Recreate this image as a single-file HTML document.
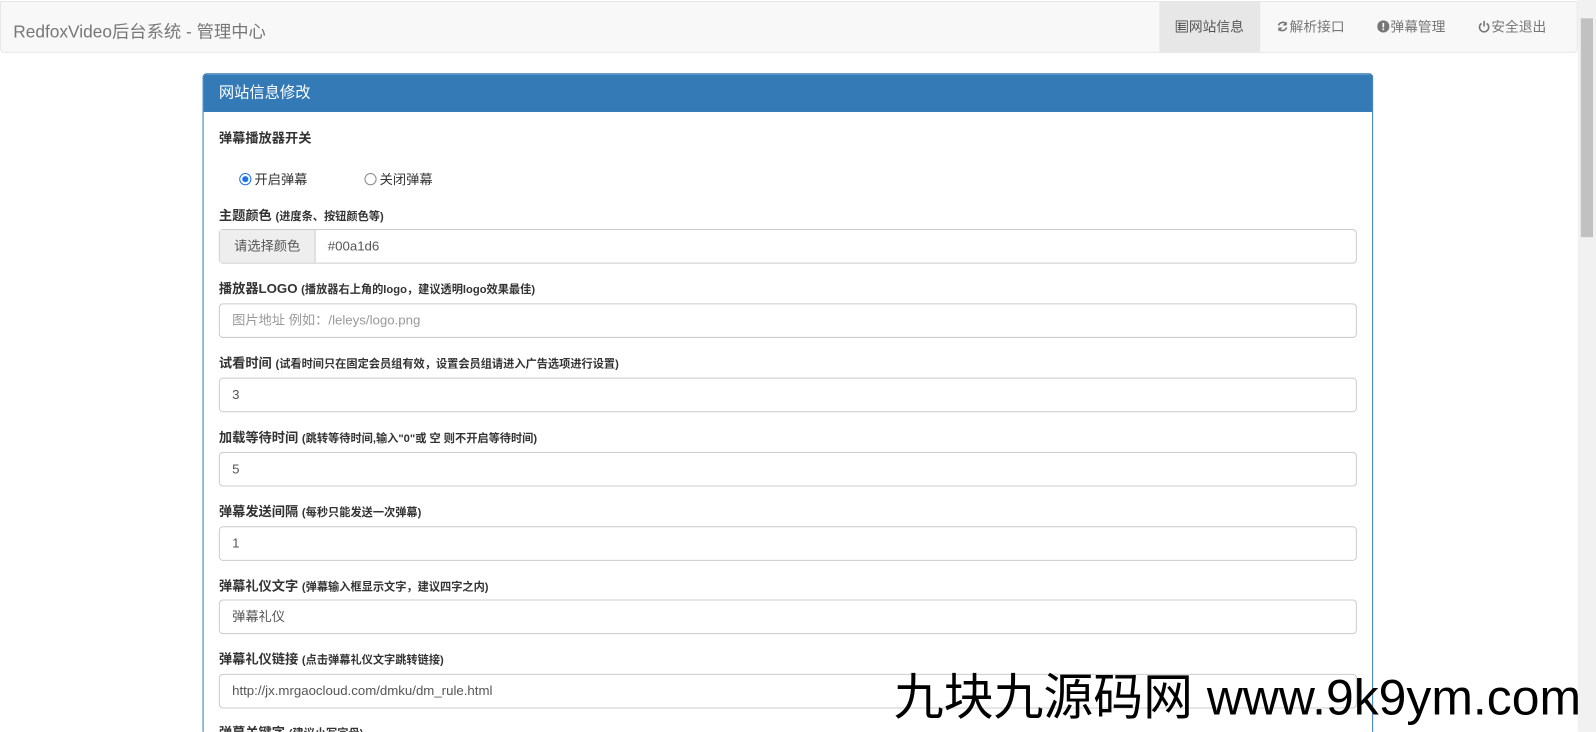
<!DOCTYPE html>
<html><head><meta charset="utf-8"><style>
*{box-sizing:border-box}
html,body{margin:0;width:1596px;height:732px;overflow:hidden;background:#fff}
body{font-family:"Liberation Sans","Noto Sans CJK SC",sans-serif;color:#333;position:relative}
#w{position:absolute;left:0;top:0;width:1568px;height:719px;overflow:hidden;transform:scale(1.0179);transform-origin:0 0}
.nav{position:absolute;left:0;top:1px;width:1550px;height:51px;background:#f8f8f8;border:1px solid #e7e7e7;border-radius:0 0 4px 4px}
.brand{position:absolute;left:12px;top:15px;font-size:17px;color:#777}
.links{position:absolute;right:0;top:0;height:49px;display:flex}
.links a{display:block;padding:0 16px;line-height:49px;font-size:13.5px;color:#777;text-decoration:none}
.links a.act{background:#e7e7e7;color:#555}
.links svg{vertical-align:-1px;margin-right:1px}
.sb{position:absolute;left:1550px;top:0;width:18px;height:719px;background:#f1f1f1}
.sb div{position:absolute;left:3px;top:18px;width:12px;height:215px;background:#c1c1c1}
.panel{position:absolute;left:199px;top:72px;width:1150px;height:700px;border:1px solid #337ab7;border-radius:4px;overflow:hidden}
.ph{background:#337ab7;color:#fff;height:37px;padding:0 15px;line-height:37px;font-size:15px}
.lbl{position:absolute;left:15px;font-size:13px;font-weight:bold;color:#333}
.lbl small{font-size:11px;font-weight:bold}
.inp{position:absolute;left:15px;width:1118px;height:34px;border:1px solid #ccc;border-radius:4px;font-size:13px;color:#555;line-height:32px;padding-left:12px}
.rad{position:absolute;top:93px;font-size:13px;color:#333}
.rad i{display:inline-block;width:12px;height:12px;border:1px solid #888;border-radius:50%;vertical-align:-1px;margin-right:3px;position:relative}
.wm{position:absolute;left:878px;top:646px;font-size:49px;color:#000;white-space:nowrap}
</style></head><body><div id="w">
<div class="nav"><div class="brand">RedfoxVideo后台系统 - 管理中心</div>
<div class="links">
<a class="act"><svg width="12" height="12" viewBox="0 0 12 12"><rect x="0.5" y="0.5" width="11" height="11" fill="none" stroke="#555"/><path d="M2 3h8M2 5h8M2 7h8M2 9h8M4 2v8" stroke="#555"/></svg>网站信息</a>
<a><svg width="12" height="12" viewBox="0 0 12 12"><path d="M10 4A4.5 4.5 0 0 0 2 5M2 8a4.5 4.5 0 0 0 8-1" fill="none" stroke="#777" stroke-width="1.6"/><path d="M10 1v4H6M2 11V7h4" fill="#777"/></svg>解析接口</a>
<a><svg width="12" height="12" viewBox="0 0 12 12"><circle cx="6" cy="6" r="6" fill="#777"/><rect x="5.2" y="2.5" width="1.6" height="4.5" fill="#fff"/><rect x="5.2" y="8" width="1.6" height="1.6" fill="#fff"/></svg>弹幕管理</a>
<a><svg width="12" height="12" viewBox="0 0 12 12"><path d="M3.5 3A4.5 4.5 0 1 0 8.5 3" fill="none" stroke="#777" stroke-width="1.6"/><path d="M6 0.5v5.5" stroke="#777" stroke-width="1.6"/></svg>安全退出</a>
<span style="width:14px"></span></div></div>
<div class="panel"><div class="ph">网站信息修改</div>
<div class="lbl" style="top:52px">弹幕播放器开关</div>
<div class="rad" style="left:35px"><i style="border-color:#1a73e8"><b style="position:absolute;left:2px;top:2px;width:6px;height:6px;border-radius:50%;background:#1a73e8"></b></i>开启弹幕</div>
<div class="rad" style="left:158px"><i></i>关闭弹幕</div>
<div class="lbl" style="top:128px">主题颜色 <small>(进度条、按钮颜色等)</small></div>
<div class="inp" style="top:152px;padding:0"><span style="display:inline-block;width:94px;height:32px;background:#eee;border-right:1px solid #ccc;text-align:center">请选择颜色</span><span style="padding-left:12px">#00a1d6</span></div>
<div class="lbl" style="top:200px">播放器LOGO <small>(播放器右上角的logo，建议透明logo效果最佳)</small></div>
<div class="inp" style="top:225px;color:#999">图片地址 例如：/leleys/logo.png</div>
<div class="lbl" style="top:273px">试看时间 <small>(试看时间只在固定会员组有效，设置会员组请进入广告选项进行设置)</small></div>
<div class="inp" style="top:298px">3</div>
<div class="lbl" style="top:346px">加载等待时间 <small>(跳转等待时间,输入"0"或 空 则不开启等待时间)</small></div>
<div class="inp" style="top:371px">5</div>
<div class="lbl" style="top:419px">弹幕发送间隔 <small>(每秒只能发送一次弹幕)</small></div>
<div class="inp" style="top:444px">1</div>
<div class="lbl" style="top:492px">弹幕礼仪文字 <small>(弹幕输入框显示文字，建议四字之内)</small></div>
<div class="inp" style="top:516px">弹幕礼仪</div>
<div class="lbl" style="top:564px">弹幕礼仪链接 <small>(点击弹幕礼仪文字跳转链接)</small></div>
<div class="inp" style="top:589px">http://jx.mrgaocloud.com/dmku/dm_rule.html</div>
<div class="lbl" style="top:636px">弹幕关键字 <small>(建议小写字母)</small></div>
</div>
<div class="sb"><div></div></div>
<div class="wm">九块九源码网 www.9k9ym.com</div>
</div></body></html>
